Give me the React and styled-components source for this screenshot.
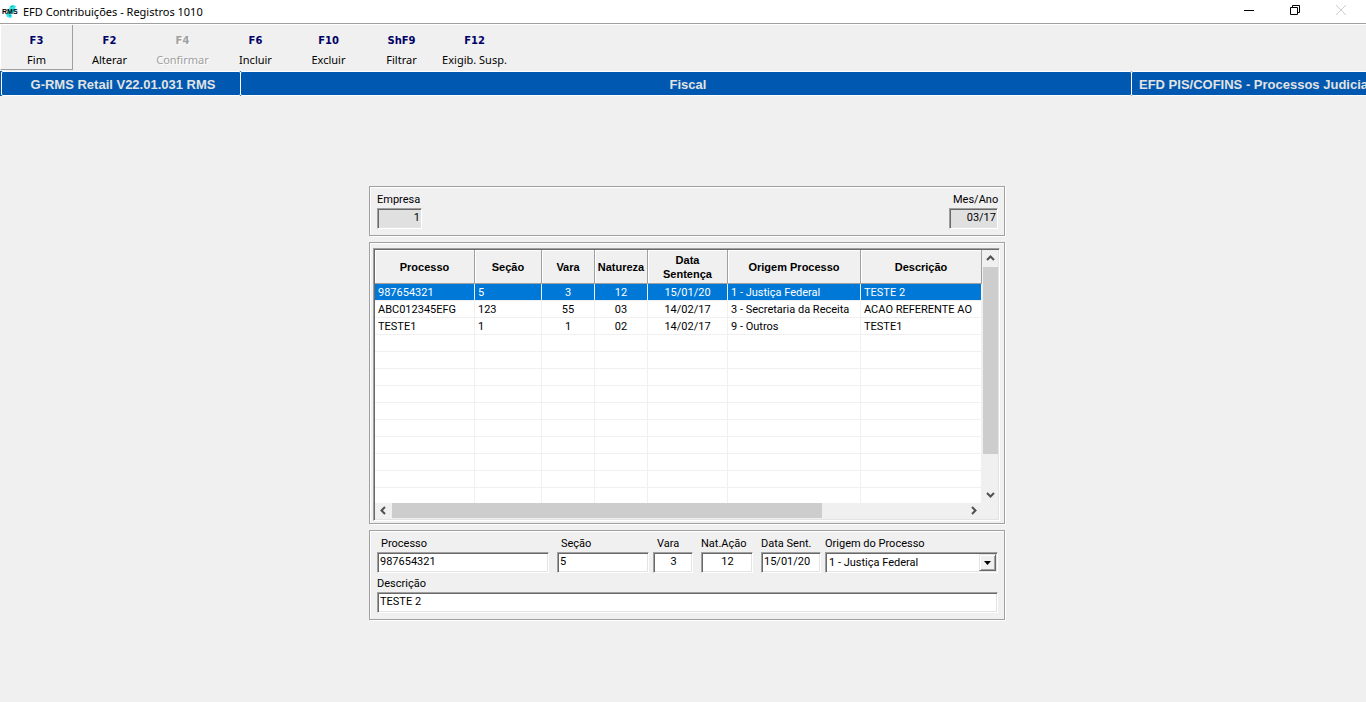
import React, { useState } from "react"
import styled, { createGlobalStyle } from "styled-components"

// Styles
const GlobalStyle = createGlobalStyle`
  * {
    box-sizing: border-box;
  }

  body {
    margin: 0;
    background: #f0f0f0;
    color: #000;
    font-family: "Liberation Sans", Arial, sans-serif;
    font-size: 11px;
  }
`
const Window = styled.div`
  min-height: 100vh;
  display: flex;
  flex-direction: column;
  background: #f0f0f0;
  overflow: hidden;
`
const TitleBar = styled.header`
  display: flex;
  align-items: center;
  height: 24px;
  padding: 0 2px;
  background: #fff;
  border-bottom: 1px solid #a0a0a0;
`
const Title = styled.h1`
  flex: 1;
  margin: 0 0 0 4px;
  font-family: "Noto Sans", "Open Sans", sans-serif;
  font-size: 11px;
  line-height: 16px;
  font-weight: 400;
`
const WindowButton = styled.button`
  display: flex;
  align-items: center;
  justify-content: center;
  align-self: flex-start;
  width: 46px;
  height: 21px;
  padding: 0;
  border: none;
  background: transparent;
  color: ${(props) => (props.disabled ? "#ccc" : "#000")};
`
const Toolbar = styled.nav`
  display: flex;
  height: 47px;
  border-top: 1px solid #fff;
`
const ToolButton = styled.button`
  width: 73px;
  height: 45px;
  padding: 6px 0 0;
  border: solid transparent;
  border-width: 0 1px 1px;
  border-color: ${(props) =>
    props.$raised ? "transparent #a0a0a0 #a0a0a0 #fff" : "transparent"};
  background: transparent;
  color: ${(props) => (props.disabled ? "#a0a0a0" : "#000")};
  text-shadow: ${(props) => (props.disabled ? "1px 1px #fff" : "none")};
  white-space: nowrap;
`
const ToolKey = styled.span`
  display: block;
  font-family: "DejaVu Sans", Verdana, sans-serif;
  font-size: 10px;
  line-height: 20px;
  font-weight: 700;
  color: ${(props) => (props.$off ? "#a0a0a0" : "#000066")};
`
const ToolLabel = styled.span`
  display: block;
  font-family: "Noto Sans", "Open Sans", sans-serif;
  font-size: 11px;
  line-height: 18px;
`
const Band = styled.div`
  display: flex;
  height: 25px;
  padding-left: 1px;
  background: #0058b0;
  color: #e3e3e3;
  font-size: 13px;
  font-weight: 700;
  line-height: 25px;
  white-space: nowrap;
`
const BandCell = styled.div`
  flex: ${(props) => (props.$width ? `0 0 ${props.$width}px` : 1)};
  padding-left: ${(props) => (props.$align === "left" ? 7 : 4)}px;
  border: 1px solid #fff;
  border-radius: 2px;
  text-align: ${(props) => props.$align || "center"};
  overflow: hidden;

  & + & {
    margin-left: -1px;
  }

  &:last-child {
    border-right: none;
    border-radius: 2px 0 0 2px;
  }
`
const Content = styled.main`
  display: flex;
  flex-direction: column;
  gap: 6px;
  width: 100%;
  max-width: 644px;
  margin: 90px auto 0;
  padding-left: 8px;
`
const Panel = styled.section`
  padding: ${(props) => (props.$tight ? "5px 4px 2px 3px" : "5px 6px 6px 7px")};
  border: 1px solid #a0a0a0;
  box-shadow: 1px 1px #fff, inset 1px 1px #fff;
`
const FieldRow = styled.div`
  display: flex;
  justify-content: ${(props) => (props.$spread ? "space-between" : "normal")};
  gap: 4px;

  & + & {
    margin-top: 3px;
  }
`
const Field = styled.div`
  display: flex;
  flex-direction: column;
  gap: 2px;
  flex: ${(props) => (props.$width ? `0 0 ${props.$width}px` : 1)};
  min-width: 0;
  margin-left: ${(props) => (props.$apart ? 4 : 0)}px;
`
const FieldLabel = styled.label`
  padding: 2px 0 0 ${(props) => (props.$indent ? 4 : 0)}px;
  font-family: Roboto, "Liberation Sans", sans-serif;
  font-size: 11px;
  line-height: 12px;
  white-space: nowrap;
`
const sunken = `
  border: 1px solid;
  border-color: #a0a0a0 #fff #fff #a0a0a0;
  box-shadow: inset 1px 1px #696969, inset -1px -1px #e3e3e3;
  border-radius: 0;
  outline: none;
`
const TextInput = styled.input`
  ${sunken}
  width: 100%;
  height: 21px;
  padding: 0 1px 2px 2px;
  background: ${(props) => (props.readOnly ? "#e0e0e0" : "#fff")};
  color: #000;
  font-family: Roboto, "Liberation Sans", sans-serif;
  font-size: 11px;
  text-align: ${(props) => props.$align || "left"};
`
const SelectBox = styled.div`
  position: relative;
`
const Select = styled.select`
  ${sunken}
  appearance: none;
  display: block;
  width: 100%;
  height: 21px;
  padding: 0 20px 0 3px;
  background: #fff;
  color: #000;
  font-family: Roboto, "Liberation Sans", sans-serif;
  font-size: 11px;
`
const SelectArrow = styled.span`
  position: absolute;
  top: 2px;
  right: 2px;
  display: flex;
  align-items: center;
  justify-content: center;
  width: 17px;
  height: 17px;
  border: 1px solid;
  border-color: #e3e3e3 #696969 #696969 #e3e3e3;
  box-shadow: inset 1px 1px #fff, inset -1px -1px #a0a0a0;
  background: #f0f0f0;
  pointer-events: none;
`
const GridBox = styled.div`
  ${sunken}
  display: grid;
  grid-template-columns: 1fr 16px;
  grid-template-rows: 253px 16px;
  padding: 1px;
  background: #f0f0f0;
`
const GridView = styled.div`
  background: #fff;
  overflow: hidden;
`
const Table = styled.table`
  width: 100%;
  table-layout: fixed;
  border-collapse: separate;
  border-spacing: 0;
`
const HeadCell = styled.th`
  height: 34px;
  padding: 0;
  border: solid #a0a0a0;
  border-width: 0 1px 1px 0;
  box-shadow: inset 1px 1px #fff;
  background: #f0f0f0;
  font-size: 11px;
  line-height: 14px;
  font-weight: 700;
  white-space: pre-line;
`
const Row = styled.tr`
  background: ${(props) => (props.$selected ? "#0078d7" : "#fff")};
  color: ${(props) => (props.$selected ? "#fff" : "#000")};
`
const Cell = styled.td`
  height: 17px;
  padding: 2px 3px 0;
  border: solid #f0f0f0;
  border-width: 0 1px 1px 0;
  font-family: Roboto, "Liberation Sans", sans-serif;
  font-size: 11px;
  line-height: 14px;
  text-align: ${(props) => props.$align || "left"};
  white-space: nowrap;
  overflow: hidden;
`
const ScrollTrack = styled.div`
  display: flex;
  flex-direction: ${(props) => (props.$vertical ? "column" : "row")};
  padding: ${(props) => (props.$vertical ? "0 0 0 1px" : "0 0 1px")};
`
const ScrollButton = styled.button`
  display: flex;
  align-items: center;
  justify-content: center;
  flex: 0 0 17px;
  padding: 0;
  border: none;
  background: #f0f0f0;
  color: #505050;
`
const ScrollThumb = styled.div`
  flex: 0 0 ${(props) => props.$size}px;
  margin-${(props) => (props.$vertical ? "bottom" : "right")}: auto;
  background: #cdcdcd;
`

const tools = [
  { key: "F3", label: "Fim", raised: true },
  { key: "F2", label: "Alterar" },
  { key: "F4", label: "Confirmar", disabled: true },
  { key: "F6", label: "Incluir" },
  { key: "F10", label: "Excluir" },
  { key: "ShF9", label: "Filtrar" },
  { key: "F12", label: "Exigib. Susp." },
]

const columns = [
  { name: "processo", title: "Processo", width: 100 },
  { name: "secao", title: "Seção", width: 67 },
  { name: "vara", title: "Vara", width: 53, align: "center" },
  { name: "natureza", title: "Natureza", width: 53, align: "center" },
  { name: "data", title: "Data\nSentença", width: 80, align: "center" },
  { name: "origem", title: "Origem Processo", width: 133 },
  { name: "descricao", title: "Descrição" },
]

const processos = [
  {
    processo: "987654321",
    secao: "5",
    vara: "3",
    natureza: "12",
    data: "15/01/20",
    origem: "1 - Justiça Federal",
    descricao: "TESTE 2",
  },
  {
    processo: "ABC012345EFG",
    secao: "123",
    vara: "55",
    natureza: "03",
    data: "14/02/17",
    origem: "3 - Secretaria da Receita",
    descricao: "ACAO REFERENTE AO",
  },
  {
    processo: "TESTE1",
    secao: "1",
    vara: "1",
    natureza: "02",
    data: "14/02/17",
    origem: "9 - Outros",
    descricao: "TESTE1",
  },
]

const origens = [
  "1 - Justiça Federal",
  "3 - Secretaria da Receita",
  "9 - Outros",
]

// the grid always shows 13 lines, the last one is cut by the scroll bar
const GRID_LINES = 13

const Logo = () => (
  <svg width="17" height="14" viewBox="0 0 17 14" aria-hidden="true">
    <path
      d="M8 1l3-1 3 1-1 2 1 2-3 3-2 1 1 2-1 2-4-1-1-3 2-2 1-3z"
      fill="#2ee6e6"
    />
    <path d="M9 2l2-1M7 10l2 1" stroke="#00a8a8" />
    <text
      x="0"
      y="9"
      fontFamily="Liberation Sans"
      fontSize="7"
      fontWeight="700"
    >
      RMS
    </text>
  </svg>
)

const arrows = {
  up: "M1 6l3.5-3.5L8 6",
  down: "M1 3l3.5 3.5L8 3",
  left: "M6 1L2.5 4.5 6 8",
  right: "M3 1l3.5 3.5L3 8",
}

const Arrow = ({ to }) => (
  <svg width="9" height="9" viewBox="0 0 9 9" aria-hidden="true">
    <path d={arrows[to]} fill="none" stroke="currentColor" strokeWidth="2" />
  </svg>
)

const ScrollBar = ({ vertical, size }) => (
  <ScrollTrack $vertical={vertical}>
    <ScrollButton aria-label={vertical ? "Acima" : "Esquerda"}>
      <Arrow to={vertical ? "up" : "left"} />
    </ScrollButton>
    <ScrollThumb $vertical={vertical} $size={size} />
    <ScrollButton aria-label={vertical ? "Abaixo" : "Direita"}>
      <Arrow to={vertical ? "down" : "right"} />
    </ScrollButton>
  </ScrollTrack>
)

const LabeledInput = ({ id, label, width, apart, indent, ...rest }) => (
  <Field $width={width} $apart={apart}>
    <FieldLabel htmlFor={id} $indent={indent}>
      {label}
    </FieldLabel>
    <TextInput id={id} {...rest} />
  </Field>
)

const ProcessGrid = ({ selected, onSelect }) => {
  const lines = Array.from({ length: GRID_LINES }, (_, i) => processos[i] || {})

  return (
    <GridBox>
      <GridView>
        <Table>
          <colgroup>
            {columns.map((col) => (
              <col key={col.name} width={col.width} />
            ))}
          </colgroup>
          <thead>
            <tr>
              {columns.map((col) => (
                <HeadCell key={col.name}>{col.title}</HeadCell>
              ))}
            </tr>
          </thead>
          <tbody>
            {lines.map((line, i) => (
              <Row
                key={i}
                $selected={i === selected}
                onClick={() => line.processo && onSelect(i)}
              >
                {columns.map((col) => (
                  <Cell key={col.name} $align={col.align}>
                    {line[col.name]}
                  </Cell>
                ))}
              </Row>
            ))}
          </tbody>
        </Table>
      </GridView>
      <ScrollBar vertical size={187} />
      <ScrollBar size={430} />
    </GridBox>
  )
}

const App = () => {
  const [selected, setSelected] = useState(0)
  const [form, setForm] = useState(processos[0])

  // load the clicked line in the form below
  const selectLine = (index) => {
    setSelected(index)
    setForm(processos[index])
  }

  const changed = (e) => {
    const { name, value } = e.target
    setForm((form) => ({ ...form, [name]: value }))
  }

  return (
    <Window>
      <GlobalStyle />
      <TitleBar>
        <Logo />
        <Title>EFD Contribuições - Registros 1010</Title>
        <WindowButton aria-label="Minimizar">
          <svg width="11" height="11" viewBox="0 0 11 11">
            <path d="M0 5.5h10" stroke="currentColor" />
          </svg>
        </WindowButton>
        <WindowButton aria-label="Restaurar">
          <svg width="11" height="11" viewBox="0 0 11 11">
            <path
              d="M.5 2.5h7v7h-7zM2.5 2.5v-2h7v7h-2"
              fill="none"
              stroke="currentColor"
            />
          </svg>
        </WindowButton>
        <WindowButton aria-label="Fechar" disabled>
          <svg width="11" height="11" viewBox="0 0 11 11">
            <path d="M0 0l10 10M10 0L0 10" stroke="currentColor" />
          </svg>
        </WindowButton>
      </TitleBar>
      <Toolbar>
        {tools.map((tool) => (
          <ToolButton
            key={tool.key}
            $raised={tool.raised}
            disabled={tool.disabled}
          >
            <ToolKey $off={tool.disabled}>{tool.key}</ToolKey>
            <ToolLabel>{tool.label}</ToolLabel>
          </ToolButton>
        ))}
      </Toolbar>
      <Band>
        <BandCell $width={240}>G-RMS Retail V22.01.031 RMS</BandCell>
        <BandCell>Fiscal</BandCell>
        <BandCell $width={235} $align="left">
          EFD PIS/COFINS - Processos Judicia
        </BandCell>
      </Band>
      <Content>
        <Panel>
          <FieldRow $spread>
            <LabeledInput
              id="empresa"
              label="Empresa"
              width={45}
              $align="right"
              defaultValue="1"
              readOnly
            />
            <LabeledInput
              id="mesAno"
              label="Mes/Ano"
              width={49}
              indent
              $align="right"
              defaultValue="03/17"
              readOnly
            />
          </FieldRow>
        </Panel>
        <Panel $tight>
          <ProcessGrid selected={selected} onSelect={selectLine} />
        </Panel>
        <Panel>
          <FieldRow>
            <LabeledInput
              id="processo"
              name="processo"
              label="Processo"
              width={172}
              indent
              value={form.processo}
              onChange={changed}
            />
            <LabeledInput
              id="secao"
              name="secao"
              label="Seção"
              width={92}
              apart
              indent
              value={form.secao}
              onChange={changed}
            />
            <LabeledInput
              id="vara"
              name="vara"
              label="Vara"
              width={40}
              indent
              $align="center"
              value={form.vara}
              onChange={changed}
            />
            <LabeledInput
              id="natureza"
              name="natureza"
              label="Nat.Ação"
              width={52}
              apart
              $align="center"
              value={form.natureza}
              onChange={changed}
            />
            <LabeledInput
              id="data"
              name="data"
              label="Data Sent."
              width={60}
              apart
              value={form.data}
              onChange={changed}
            />
            <Field>
              <FieldLabel htmlFor="origem">Origem do Processo</FieldLabel>
              <SelectBox>
                <Select
                  id="origem"
                  name="origem"
                  value={form.origem}
                  onChange={changed}
                >
                  {origens.map((origem) => (
                    <option key={origem}>{origem}</option>
                  ))}
                </Select>
                <SelectArrow>
                  <svg width="7" height="4" viewBox="0 0 7 4">
                    <path d="M0 0h7L3.5 4z" />
                  </svg>
                </SelectArrow>
              </SelectBox>
            </Field>
          </FieldRow>
          <FieldRow>
            <LabeledInput
              id="descricao"
              name="descricao"
              label="Descrição"
              value={form.descricao}
              onChange={changed}
            />
          </FieldRow>
        </Panel>
      </Content>
    </Window>
  )
}

export default App
